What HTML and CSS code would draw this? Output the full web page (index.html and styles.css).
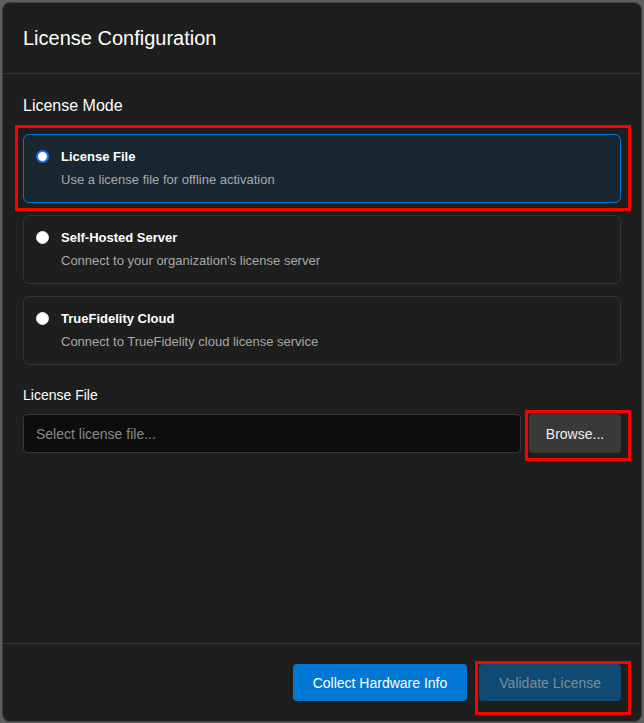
FILE: index.html
```html
<!DOCTYPE html>
<html lang="en">

<head>
    <meta charset="UTF-8">
    <meta name="viewport" content="width=device-width, initial-scale=1.0">
    <title>License Configuration</title>
    <link rel="stylesheet" href="styles.css">
</head>

<body>
    <div class="dialog">
        <div class="dialog-header">
            <h2>License Configuration</h2>
        </div>

        <div class="dialog-body">
            <h3 class="section-title">License Mode</h3>

            <div class="mode-list">
                <label class="mode-card selected">
                    <input type="radio" name="mode" checked>
                    <div class="mode-text">
                        <div class="mode-name">License File</div>
                        <div class="mode-desc">Use a license file for offline activation</div>
                    </div>
                </label>
                <label class="mode-card">
                    <input type="radio" name="mode">
                    <div class="mode-text">
                        <div class="mode-name">Self-Hosted Server</div>
                        <div class="mode-desc">Connect to your organization's license server</div>
                    </div>
                </label>
                <label class="mode-card">
                    <input type="radio" name="mode">
                    <div class="mode-text">
                        <div class="mode-name">TrueFidelity Cloud</div>
                        <div class="mode-desc">Connect to TrueFidelity cloud license service</div>
                    </div>
                </label>
            </div>

            <div class="field">
                <div class="field-label">License File</div>
                <div class="file-row">
                    <input class="file-input" type="text" placeholder="Select license file..." readonly>
                    <button class="btn btn-secondary">Browse...</button>
                </div>
            </div>
        </div>

        <div class="dialog-footer">
            <button class="btn btn-primary">Collect Hardware Info</button>
            <button class="btn btn-primary" disabled>Validate License</button>
        </div>
    </div>

    <!-- review markers -->
    <div class="mark mark-card"></div>
    <div class="mark mark-browse"></div>
    <div class="mark mark-validate"></div>
</body>

</html>
```

FILE: styles.css
```css
* {
    box-sizing: border-box;
}

body {
    margin: 0;
    padding: 2px;
    background: #5f5f5f;
    font-family: "Liberation Sans", Arial, sans-serif;
    color: #fff;
}

.dialog {
    width: 640px;
    height: 720px;
    display: flex;
    flex-direction: column;
    background: #1e1e1e;
    border: 1px solid #3c3c3c;
    border-radius: 8px;
    overflow: hidden;
}

.dialog-header {
    padding: 20px;
    border-bottom: 1px solid #333;
}

.dialog-header h2 {
    margin: 0;
    font-size: 20px;
    font-weight: normal;
    line-height: 30px;
}

.dialog-body {
    flex: 1;
    padding: 20px;
}

.section-title {
    margin: 0 0 16px;
    font-size: 16px;
    font-weight: normal;
    line-height: 24px;
}

.mode-list {
    display: flex;
    flex-direction: column;
    gap: 12px;
}

.mode-card {
    display: flex;
    align-items: flex-start;
    gap: 12px;
    padding: 12px;
    border: 1px solid #333;
    border-radius: 6px;
    background: #1e1e1e;
    cursor: pointer;
}

.mode-card.selected {
    border-color: #0078d4;
    background: #1b2730;
}

.mode-card input {
    appearance: none;
    margin: 3px 0 0;
    width: 13px;
    height: 13px;
    flex-shrink: 0;
    border-radius: 50%;
    background: #fff;
    border: 1px solid #e6e6e6;
}

.mode-card input:checked {
    border: 2px solid #1a73f0;
}

.mode-name {
    font-size: 13px;
    font-weight: bold;
    line-height: 20px;
}

.mode-desc {
    margin-top: 3px;
    font-size: 13px;
    line-height: 20px;
    color: #a8a8a8;
}

.field {
    margin-top: 20px;
}

.field-label {
    margin-bottom: 9px;
    font-size: 14px;
    line-height: 20px;
}

.file-row {
    display: flex;
    gap: 8px;
}

.file-input {
    flex: 1;
    height: 39px;
    padding: 0 12px;
    background: #0d0d0d;
    border: 1px solid #363636;
    border-radius: 4px;
    color: #fff;
    font-family: inherit;
    font-size: 14px;
    outline: none;
}

.file-input::placeholder {
    color: #8a8a8a;
}

.btn {
    border: none;
    border-radius: 4px;
    font-family: inherit;
    font-size: 14px;
    cursor: pointer;
}

.btn-secondary {
    width: 92px;
    height: 39px;
    background: #393939;
    color: #eee;
}

.btn-primary {
    height: 37px;
    padding: 0 20px;
    background: #0078d4;
    color: #fff;
}

.btn-primary:disabled {
    background: #0e4a73;
    color: #7d8c99;
    cursor: default;
}

.dialog-footer {
    display: flex;
    justify-content: flex-end;
    gap: 12px;
    padding: 20px;
    border-top: 1px solid #333;
}

.mark {
    position: absolute;
    border: 3px solid #ff0000;
    pointer-events: none;
}

.mark-card {
    left: 15px;
    top: 125px;
    width: 616px;
    height: 86px;
}

.mark-browse {
    left: 525px;
    top: 410px;
    width: 106px;
    height: 51px;
}

.mark-validate {
    left: 475px;
    top: 661px;
    width: 156px;
    height: 54px;
}
```
